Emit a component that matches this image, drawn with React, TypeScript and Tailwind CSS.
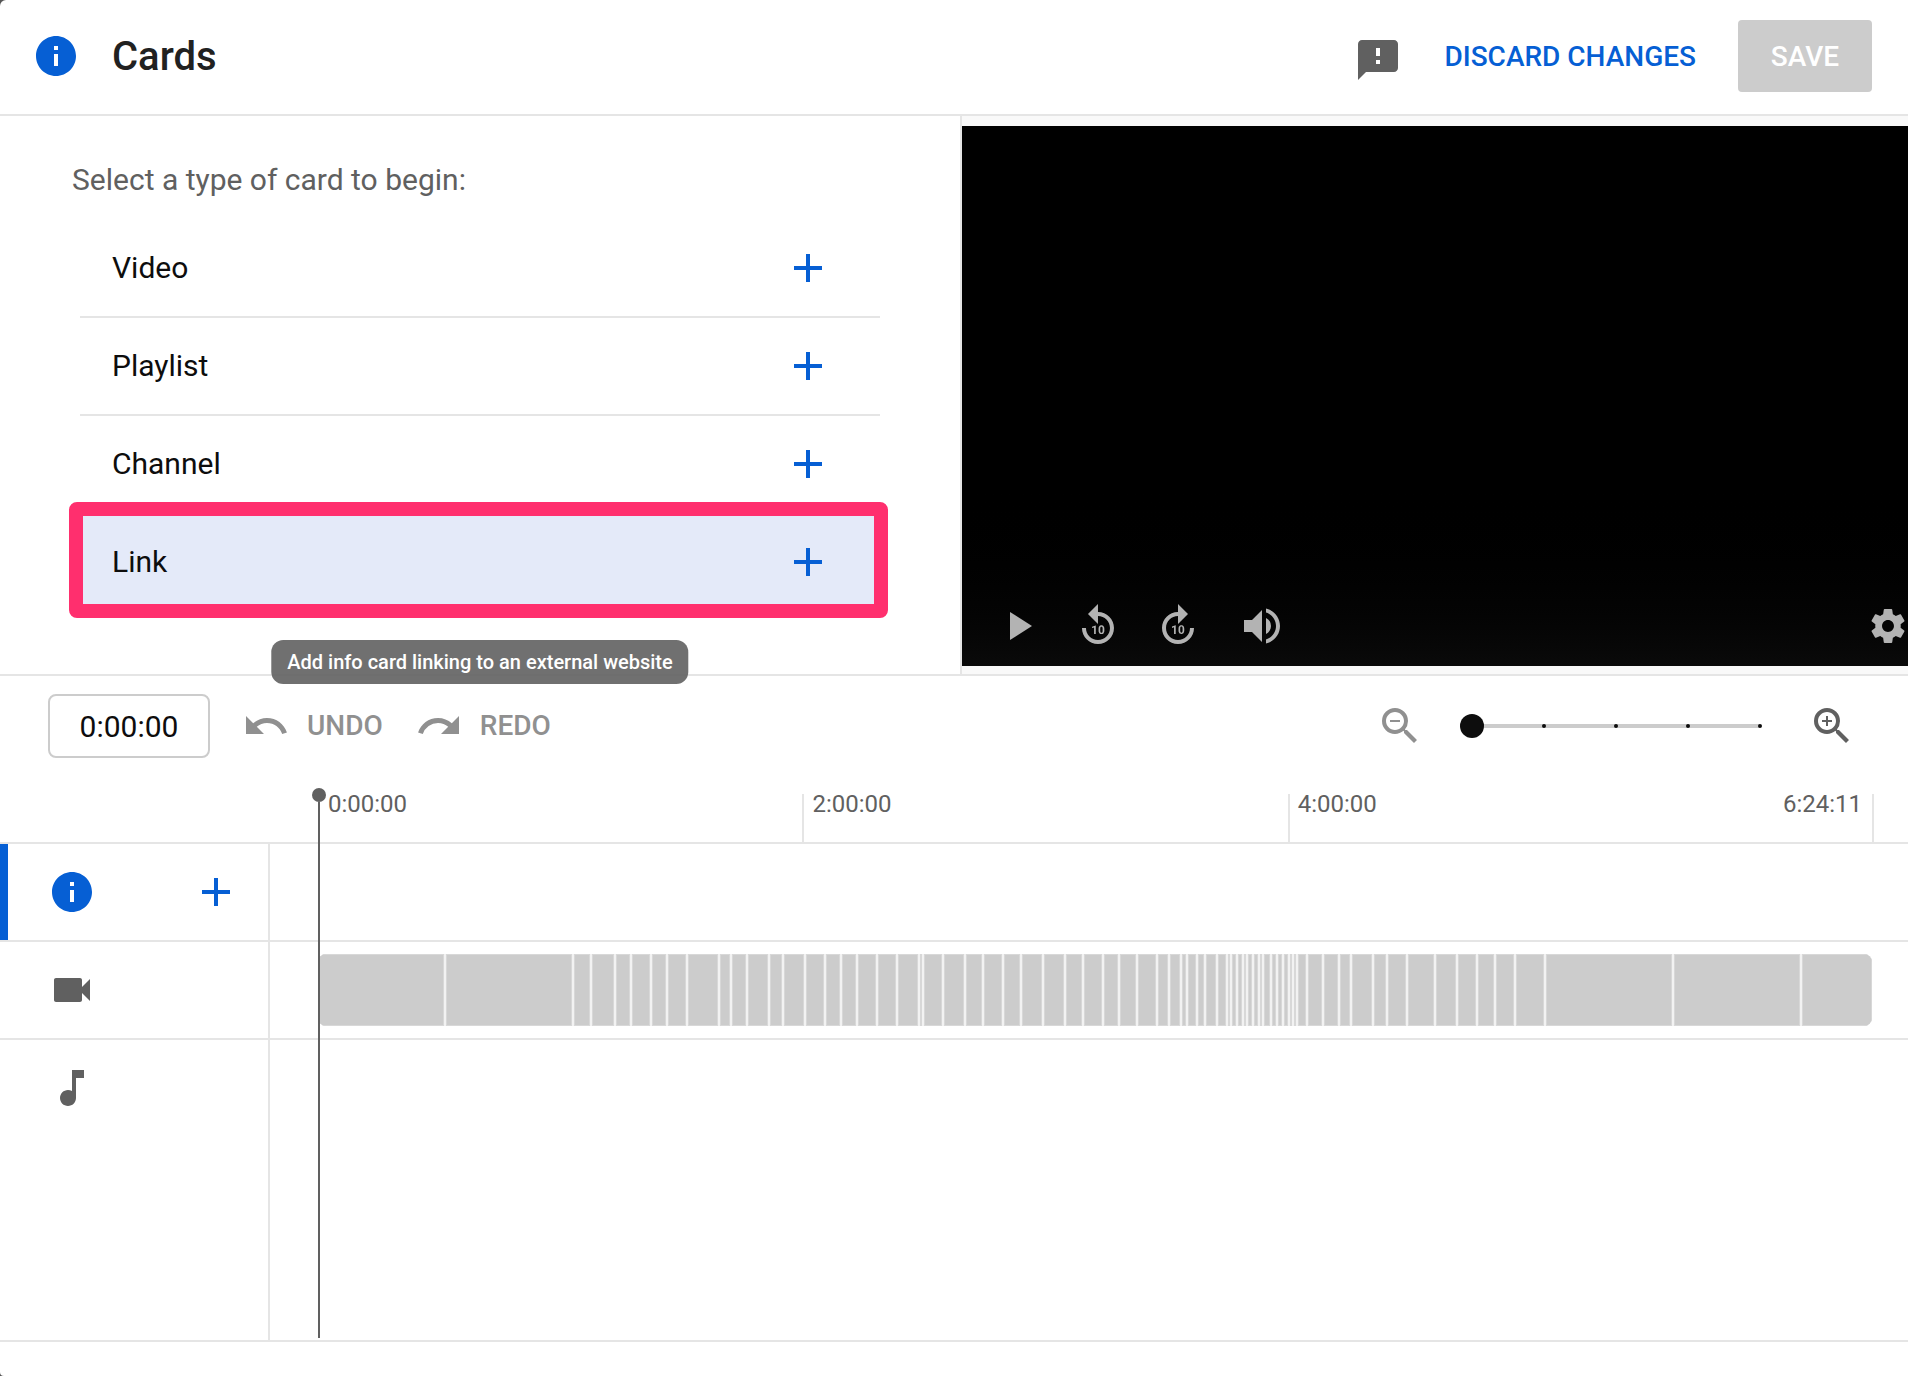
import { useState } from "react";
import clsx from "clsx";
import {
  MdAdd,
  MdFeedback,
  MdForward10,
  MdInfo,
  MdMusicNote,
  MdPlayArrow,
  MdRedo,
  MdReplay10,
  MdUndo,
  MdVideocam,
  MdVolumeUp,
  MdZoomIn,
  MdZoomOut,
} from "react-icons/md";

const cardTypes = [
  { name: "Video" },
  { name: "Playlist" },
  { name: "Channel" },
  { name: "Link", hint: "Add info card linking to an external website" },
];

// Length of every clip on the video track, in timeline units
const clips = [
  128, 128, 18, 24, 16, 20, 16, 20, 32, 12, 16, 22, 14, 22, 20, 16, 16, 20, 20,
  22, 4, 20, 22, 18, 20, 18, 22, 22, 18, 20, 16, 18, 20, 12, 12, 6, 10, 8, 12,
  10, 4, 6, 6, 4, 6, 6, 4, 8, 6, 6, 6, 4, 4, 10, 16, 16, 12, 22, 14, 20, 28, 22,
  20, 18, 20, 30, 128, 128, 70,
];

const DURATION = 6 * 3600 + 24 * 60 + 11;

const marks = [
  { label: "0:00:00", seconds: 0 },
  { label: "2:00:00", seconds: 7200 },
  { label: "4:00:00", seconds: 14400 },
];

function GearIcon({ className }: { className?: string }) {
  return (
    <svg viewBox="10 10 16 16" fill="currentColor" className={className}>
      <path d="m23.94 18.78c.03-.25.05-.51.05-.78s-.02-.52-.05-.78l1.68-1.32c.15-.12.19-.33.09-.51l-1.6-2.76c-.09-.17-.31-.24-.48-.17l-1.99.8c-.41-.32-.86-.58-1.35-.78l-.3-2.12c-.02-.19-.19-.33-.39-.33h-3.2c-.2 0-.36.14-.39.33l-.3 2.12c-.48.2-.93.47-1.35.78l-1.99-.8c-.18-.07-.39 0-.48.17l-1.6 2.76c-.1.17-.05.39.09.51l1.68 1.32c-.03.25-.05.52-.05.78s.02.52.05.78l-1.68 1.32c-.15.12-.19.33-.09.51l1.6 2.76c.09.17.31.24.48.17l1.99-.8c.41.32.86.58 1.35.78l.3 2.12c.02.19.19.33.39.33h3.2c.2 0 .36-.14.39-.33l.3-2.12c.48-.2.93-.47 1.35-.78l1.99.8c.18.07.39 0 .48-.17l1.6-2.76c.09-.17.05-.39-.09-.51l-1.68-1.32zm-5.94 2.01c-1.54 0-2.8-1.25-2.8-2.8s1.25-2.8 2.8-2.8 2.8 1.25 2.8 2.8-1.25 2.8-2.8 2.8z" />
    </svg>
  );
}

function Header() {
  return (
    <header className="flex items-center justify-between border-b-2 border-[#e5e5e5] pt-5 pr-9 pb-[22px] pl-8">
      <div className="flex items-center gap-8">
        <MdInfo className="size-12 text-[#065fd4]" />
        <h1 className="pt-0.5 text-[40px] leading-12 font-medium text-[#212121]">
          Cards
        </h1>
      </div>
      <div className="flex items-center gap-[42px]">
        <button aria-label="Send feedback" className="pt-2">
          <MdFeedback className="size-12 text-[#606060]" />
        </button>
        <button className="pt-0.5 text-[28px] leading-10 font-medium text-[#065fd4]">
          DISCARD CHANGES
        </button>
        <button
          disabled
          className="h-18 w-[134px] rounded bg-[#ccc] pt-0.5 text-[28px] leading-10 font-medium text-white"
        >
          SAVE
        </button>
      </div>
    </header>
  );
}

function CardPicker() {
  return (
    <section className="px-18 pt-11 pb-16">
      <h2 className="text-[30px] leading-10 text-[#606060]">
        Select a type of card to begin:
      </h2>
      <ul className="mx-2 mt-5">
        {cardTypes.map((card) => (
          <li
            key={card.name}
            className={clsx(
              "relative",
              card.name === "Video" || card.name === "Playlist"
                ? "border-b-2 border-[#e5e5e5]"
                : card.name === "Channel" && "border-b-2 border-transparent",
            )}
          >
            <button
              className={clsx(
                "flex h-24 w-full items-center justify-between pl-8 pr-12 text-[30px] leading-10 text-[#0d0d0d]",
                card.hint && "bg-[#e4eaf9]",
              )}
            >
              {card.name}
              <MdAdd className="size-12 text-[#065fd4]" />
            </button>
            {card.hint && (
              <>
                <div className="pointer-events-none absolute -top-3 -right-2 -bottom-2 -left-[11px] rounded-lg border-14 border-[#ff2f6e]" />
                <div
                  role="tooltip"
                  className="absolute top-full left-1/2 z-10 mt-[30px] -translate-x-1/2 rounded-xl bg-[#606060]/90 px-4 py-2 text-[20px] leading-7 font-medium whitespace-nowrap text-white"
                >
                  {card.hint}
                </div>
              </>
            )}
          </li>
        ))}
      </ul>
    </section>
  );
}

function Player() {
  return (
    <section className="flex flex-col overflow-hidden border-l-2 border-[#e5e5e5] bg-[#f9f9f9] pt-2.5 pb-2">
      <div className="flex flex-1 items-end justify-between bg-linear-to-b from-black from-65% to-[#0a0a0a] pr-[3px] pb-4 pl-8 text-[#b3b3b3]">
        <div className="flex gap-8">
          <button aria-label="Play">
            <MdPlayArrow className="size-12" />
          </button>
          <button aria-label="Back 10 seconds">
            <MdReplay10 className="size-12" />
          </button>
          <button aria-label="Forward 10 seconds">
            <MdForward10 className="size-12" />
          </button>
          <button aria-label="Volume" className="pl-1">
            <MdVolumeUp className="size-12" />
          </button>
        </div>
        <button aria-label="Settings" className="flex h-12 items-center">
          <GearIcon className="size-[34px]" />
        </button>
      </div>
    </section>
  );
}

function Toolbar() {
  const [zoom, setZoom] = useState(0);

  return (
    <div className="flex h-25 items-center justify-between pr-13 pl-12">
      <div className="flex items-center gap-8">
        <input
          aria-label="Current time"
          defaultValue="0:00:00"
          className="h-16 w-[162px] rounded-lg border-2 border-[#ccc] text-center text-[30px] leading-10 text-[#0d0d0d] outline-none"
        />
        <button
          disabled
          className="flex items-center gap-[17px] text-[28px] leading-10 font-medium text-[#909090]"
        >
          <MdUndo className="size-12" />
          UNDO
        </button>
        <button
          disabled
          className="flex items-center gap-[17px] text-[28px] leading-10 font-medium text-[#909090]"
        >
          <MdRedo className="size-12" />
          REDO
        </button>
      </div>

      <div className="flex items-center gap-9">
        <button aria-label="Zoom out" disabled={zoom === 0}>
          <MdZoomOut className="size-12 text-[#909090]" />
        </button>
        <div className="relative flex h-6 w-78 items-center">
          <div className="absolute inset-x-3 h-1 bg-[#ccc]" />
          <div className="absolute inset-x-2.5 flex justify-between">
            {[0, 1, 2, 3, 4].map((step) => (
              <span key={step} className="size-1 rounded-full bg-[#0d0d0d]" />
            ))}
          </div>
          <input
            type="range"
            aria-label="Timeline zoom"
            min={0}
            max={4}
            value={zoom}
            onChange={(e) => setZoom(Number(e.target.value))}
            className="relative h-6 w-full appearance-none bg-transparent outline-none [&::-webkit-slider-thumb]:size-6 [&::-webkit-slider-thumb]:appearance-none [&::-webkit-slider-thumb]:rounded-full [&::-webkit-slider-thumb]:bg-[#0d0d0d]"
          />
        </div>
        <button
          aria-label="Zoom in"
          onClick={() => setZoom((prev) => Math.min(prev + 1, 4))}
        >
          <MdZoomIn className="size-12 text-[#606060]" />
        </button>
      </div>
    </div>
  );
}

function Timeline() {
  return (
    <section className="relative flex flex-1 flex-col text-[#606060]">
      {/* Ruler */}
      <div className="h-17 border-b-2 border-[#e5e5e5] pr-9 pl-[318px]">
        <div className="relative h-full text-[24px] leading-8">
          {marks.map((mark) => (
            <div
              key={mark.label}
              className={clsx(
                "absolute bottom-0 h-12 border-l-2 pl-2",
                mark.seconds
                  ? "-ml-px border-[#e5e5e5]"
                  : "border-transparent",
              )}
              style={{ left: `${(mark.seconds / DURATION) * 100}%` }}
            >
              <span className="-mt-1.5 block">{mark.label}</span>
            </div>
          ))}
          <div className="absolute bottom-0 left-full h-12 border-l-2 border-[#e5e5e5]">
            <span className="absolute -top-1.5 right-full mr-3">6:24:11</span>
          </div>
        </div>
      </div>

      {/* Cards */}
      <div className="flex h-[98px] border-b-2 border-[#e5e5e5]">
        <div className="flex w-[270px] items-center justify-between border-r-2 border-l-8 border-r-[#e5e5e5] border-l-[#065fd4] pr-7 pl-10 text-[#065fd4]">
          <MdInfo className="size-12" />
          <button aria-label="Add card">
            <MdAdd className="size-12" />
          </button>
        </div>
      </div>

      {/* Video */}
      <div className="flex h-[98px] border-b-2 border-[#e5e5e5]">
        <div className="flex w-[270px] shrink-0 items-center border-r-2 border-[#e5e5e5] pl-12">
          <MdVideocam className="size-12" />
        </div>
        <div className="flex flex-1 items-center pr-9 pl-12">
          <div className="flex h-18 flex-1 overflow-hidden rounded-lg bg-[#f2f2f2]">
            {clips.map((length, i) => (
              <div
                key={i}
                className="group min-w-0 basis-0"
                style={{ flexGrow: length }}
              >
                <div className="mr-0.5 h-full border border-[#d8d8d8] bg-[#ccc] group-last:mr-0" />
              </div>
            ))}
          </div>
        </div>
      </div>

      {/* Audio */}
      <div className="flex flex-1">
        <div className="w-[270px] border-r-2 border-[#e5e5e5] pt-6 pl-12">
          <MdMusicNote className="size-12" />
        </div>
      </div>

      {/* Playhead */}
      <div className="absolute top-3 bottom-0.5 left-78 flex w-3.5 flex-col items-center">
        <span className="size-3.5 rounded-full bg-[#606060]" />
        <span className="w-0.5 flex-1 bg-[#606060]" />
      </div>
    </section>
  );
}

export default function App() {
  return (
    <div className="bg-[#555]">
      <div className="flex min-h-screen flex-col rounded-tl-md rounded-bl-sm bg-white font-[Roboto,sans-serif]">
        <Header />
        <main className="flex flex-1 flex-col">
          <div className="grid grid-cols-[960fr_948fr] border-b-2 border-[#e5e5e5]">
            <CardPicker />
            <Player />
          </div>
          <Toolbar />
          <Timeline />
        </main>
        <footer className="h-9 border-t-2 border-[#e5e5e5]" />
      </div>
    </div>
  );
}
